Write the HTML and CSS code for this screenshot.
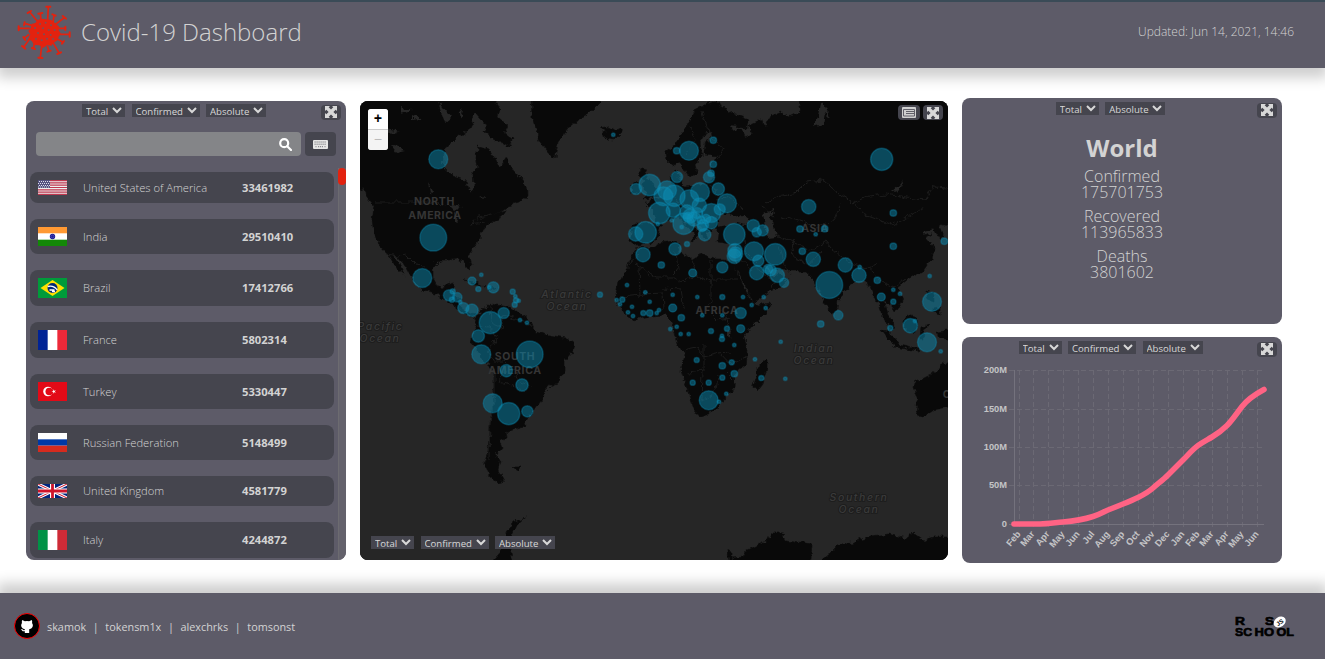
FILE: index.html
```html
<!DOCTYPE html>
<html lang="en">
<head>
<meta charset="utf-8">
<title>Covid-19 Dashboard</title>
<link rel="stylesheet" href="styles.css">
</head>
<body>
<svg class="sprite" width="0" height="0" aria-hidden="true">
  <symbol id="expand" viewBox="0 0 12 12"><path d="M0 0h5L3.700 1.300 6 3.600l2.300-2.300L7 0H12v5L10.700 3.700 8.400 6l2.300 2.300L12 7V12H7l1.300-1.300L6 8.400l-2.300 2.300L5 12H0V7l1.300 1.300L3.600 6 1.300 3.700 0 5z"/></symbol>
</svg>
<header class="header">
  <svg class="virus" viewBox="52 15 165 165">
    <g class="virus-line">
      <path d="M144 60L146 21M112 62L90 36M124 60L122 40M160 68L163 45M165 75L195 52M90 85H58M96 76L77 71M174 103H210M177 85H197M92 113L72 142M88 103L73 115M126 138L122 173M143 138L148 154M160 128L179 160M173 117L190 127M104 132L101 145"/>
      <path class="caps" d="M140 20H152M84 39L94 33M116 41L128 39M158 43L168 47M189 48L199 56M57 79V91M75 67L73 76M210 97V110M197 80V90M67 138L77 146M71 111L77 120M116 173L128 174M143 155L153 152M173 162L184 157M187 131L193 123M97 144L106 147"/>
    </g>
    <path class="virus-core" d="M113 60L126 56 139 58 155 60 166 69 179 80 177 91 184 101 177 110 174 121 162 128 155 137 142 136 130 144 119 136 103 135 97 124 86 116 92 103 86 94 93 84 95 72 107 69z"/>
    <g class="virus-dots"><circle cx="121" cy="72" r="3"/><circle cx="138" cy="68" r="3"/><circle cx="154" cy="76" r="3"/><circle cx="106" cy="84" r="3"/><circle cx="130" cy="85" r="3"/><circle cx="147" cy="90" r="3"/><circle cx="165" cy="90" r="3"/><circle cx="115" cy="99" r="3"/><circle cx="133" cy="103" r="3"/><circle cx="153" cy="105" r="3"/><circle cx="109" cy="116" r="3"/><circle cx="126" cy="121" r="3"/><circle cx="142" cy="116" r="3"/><circle cx="160" cy="117" r="3"/></g>
  </svg>
  <h1 class="title">Covid-19 Dashboard</h1>
  <p class="updated">Updated: Jun 14, 2021, 14:46</p>
</header>

<main class="main">
  <section class="panel list-panel">
    <div class="filters"><select class="w-total"><option>Total</option></select><select class="w-conf"><option>Confirmed</option></select><select class="w-abs"><option>Absolute</option></select></div>
    <button class="icon-btn expand-btn"><svg viewBox="0 0 12 12"><use href="#expand"/></svg></button>
    <div class="search-row">
      <div class="search"><svg viewBox="0 0 13 13"><circle cx="5.200" cy="5.200" r="4"/><path d="M8.200 8.200l3.800 3.800"/></svg></div>
      <button class="kb"><svg viewBox="0 0 15 9"><rect width="15" height="9" rx="1"/><path d="M1.500 2h12M1.500 4.200h12M2.500 6.700h1M5 6.700h5M11.500 6.700h1" stroke-dasharray="1.200 .8"/></svg></button>
    </div>
    <div class="list-wrap">
      <ul class="list">
        <li><svg class="flag" height="15" viewBox="0 0 29 15" preserveAspectRatio="none"><rect width="29" height="15" fill="#eee"/><path d="M0 .6h29M0 2.900h29M0 5.200h29M0 7.500h29M0 9.800h29M0 12.100h29M0 14.400h29" stroke="#bf3850" stroke-width="1.200"/><rect width="12" height="8" fill="#54527f"/><path d="M1 1.500h11M0 3.500h11M1 5.500h11M0 7h11" stroke="#dde" stroke-dasharray="1 1"/></svg><span class="name">United States of America</span><b>33461982</b></li>
        <li><svg class="flag" height="19" viewBox="0 0 29 19" preserveAspectRatio="none"><rect width="29" height="19" fill="#fff"/><rect width="29" height="6.300" fill="#f93"/><rect y="12.700" width="29" height="6.300" fill="#138808"/><circle cx="14.500" cy="9.500" r="2.700" fill="#1b1b94"/><circle cx="14.500" cy="9.500" r="1.500" fill="none" stroke="#6868c8" stroke-width=".5"/></svg><span class="name">India</span><b>29510410</b></li>
        <li><svg class="flag" height="20" viewBox="0 0 29 20" preserveAspectRatio="none"><rect width="29" height="20" fill="#009b3a"/><path d="M14.500 2L26.500 10 14.500 18 2.500 10z" fill="#fedf00"/><circle cx="14.500" cy="10" r="5" fill="#002776"/><path d="M9.700 8.500q6-1.500 9.500 3.500M11.500 12h5M14 13.500h3" stroke="#fff" fill="none" stroke-width="1.300"/></svg><span class="name">Brazil</span><b>17412766</b></li>
        <li><svg class="flag" height="20" viewBox="0 0 3 2" preserveAspectRatio="none"><rect width="3" height="2" fill="#fff"/><rect width="1" height="2" fill="#002395"/><rect x="2" width="1" height="2" fill="#ed2939"/></svg><span class="name">France</span><b>5802314</b></li>
        <li><svg class="flag" height="19" viewBox="0 0 29 19" preserveAspectRatio="none"><rect width="29" height="19" fill="#e30a17"/><circle cx="10" cy="9.500" r="4.800" fill="#fff"/><circle cx="11.300" cy="9.500" r="3.800" fill="#e30a17"/><path d="M13.500 9.500l1.700-.5V7.200l1 1.500 1.800-.5-1.200 1.300 1.200 1.300-1.800-.5-1 1.500V10z" fill="#fff"/></svg><span class="name">Turkey</span><b>5330447</b></li>
        <li><svg class="flag" height="19" viewBox="0 0 3 3" preserveAspectRatio="none"><rect width="3" height="3" fill="#fff"/><rect y="1" width="3" height="1" fill="#0039a6"/><rect y="2" width="3" height="1" fill="#d52b1e"/></svg><span class="name">Russian Federation</span><b>5148499</b></li>
        <li><svg class="flag" height="14" viewBox="0 0 29 14" preserveAspectRatio="none"><rect width="29" height="14" fill="#00247d"/><path d="M0 0L29 14M29 0L0 14" stroke="#fff" stroke-width="3"/><path d="M0 0L29 14M29 0L0 14" stroke="#cf142b" stroke-width="1"/><path d="M14.500 0V14M0 7H29" stroke="#fff" stroke-width="5"/><path d="M14.500 0V14M0 7H29" stroke="#cf142b" stroke-width="2.800"/></svg><span class="name">United Kingdom</span><b>4581779</b></li>
        <li><svg class="flag" height="20" viewBox="0 0 3 2" preserveAspectRatio="none"><rect width="3" height="2" fill="#fff"/><rect width="1" height="2" fill="#009246"/><rect x="2" width="1" height="2" fill="#ce2b37"/></svg><span class="name">Italy</span><b>4244872</b></li>
      </ul>
      <div class="track"><div class="thumb"></div></div>
    </div>
  </section>

  <section class="map-panel">
    <svg class="map" viewBox="360 101 588 459">
      <filter id="rugged" x="0" y="0" width="1" height="1" color-interpolation-filters="sRGB"><feTurbulence type="fractalNoise" baseFrequency=".16" numOctaves="3" seed="4"/><feDisplacementMap in="SourceGraphic" scale="7" xChannelSelector="R" yChannelSelector="G"/></filter>
      <rect x="360" y="101" width="588" height="459" fill="#262626"/>
      <g filter="url(#rugged)">
      <rect x="350" y="91" width="608" height="479" fill="#262626"/>
      <g class="land">
        <path d="M350 91H494V101L500 109 498 117 508 126 505 133 513 139 509 147 501 142 493 138 484 131 487 125 480 119 475 113 470 120 473 126 466 131 459 136 454 141 445 149 443 158 443 166 453 176 466 181 469 189 473 193 474 184 473 175 478 167 476 157 478 145 489 149 496 163 501 166 507 157 513 170 523 181 527 187 528 195 519 203 508 206 500 212 493 214 506 211 502 217 496 220 489 224 482 230 480 238 476 245 468 255 471 266 470 271 466 268 464 261 457 259 449 260 439 260 433 266 433 278 438 287 444 288 446 283 454 281 452 292 460 299 461 309 471 314 477 315 483 309 491 304 503 306 512 308 519 313 531 322 535 332 549 335 566 338 574 344 572 352 565 360 565 371 558 383 548 387 543 398 533 412 523 427 506 432 507 438 500 440 503 448 496 457 500 460 498 470 504 481 497 483 489 476 484 463 488 451 489 440 491 417 494 397 494 370 483 360 476 349 471 343 474 332 478 321 472 316 465 315 459 309 451 303 443 299 436 293 423 290 413 280 406 267 397 256 392 254 399 264 404 275 398 270 389 256 379 245 374 235 372 219 374 206 366 197 360 186 350 180z"/>
        <path d="M531 91L532 118 536 131 542 145 550 155 555 158 558 142 569 128 576 122 588 115 600 103 604 91z"/>
        <path d="M600 128L606 131 601 134 608 139 615 140 622 133 619 128 611 130 606 127zM642 168L648 169 645 176 653 182 655 189 661 193 654 198 643 199 647 193 643 188 645 181 639 176zM631 186L638 182 640 188 637 194 631 194z"/>
        <path d="M666 151L667 161 673 166 681 163 685 170 690 178 697 172 695 165 702 154 700 142 706 132 712 132 705 144 704 155 720 156 713 161 711 170 715 179 706 182 697 185 686 187 681 182 677 171 671 174 672 186 663 190 660 196 646 204 652 210 656 216 654 224 635 223 631 229 630 241 637 246 650 243 658 236 660 226 672 218 680 218 688 227 694 233 692 241 697 237 699 232 690 224 685 216 690 218 701 227 704 239 709 242 707 233 715 229 719 234 718 242 730 244 737 245 737 263 725 259 714 259 700 253 695 260 685 255 678 252 680 244 677 240 660 243 648 249 639 247 631 257 628 268 618 282 616 293 618 304 625 315 633 320 651 316 665 315 671 321 674 332 677 343 684 354 681 371 688 392 695 412 700 415 715 410 727 397 734 388 735 373 745 365 747 350 743 338 752 327 765 314 771 303 757 306 750 299 742 284 733 266 741 278 749 293 754 303 767 293 781 287 787 281 781 273 774 278 766 269 763 264 771 269 782 270 790 271 805 271 815 281 822 297 830 313 837 309 838 298 850 285 860 280 867 282 872 295 878 302 883 318 892 331 894 325 888 314 885 303 890 304 896 312 903 301 897 288 907 280 923 271 932 258 934 247 926 238 932 234 923 236 922 232 934 229 941 241 944 235 939 228 958 215V91H795L802 111 790 117 782 112 770 117 765 127 762 119 749 125 752 134 745 137 741 128 733 131 729 126 747 127 748 119 732 113 715 102 697 107 683 132 675 145z"/>
        <path d="M767 359L757 367 757 375 753 387 757 391 763 383 767 368zM880 330L888 331 898 343 895 345 887 339zM894 344L908 347 919 349 917 351 895 347zM903 319L913 315 918 322 912 333 904 329zM921 327L930 325 923 330 924 339 920 339zM926 291L934 294 934 302 928 300zM933 308L940 307 940 314 933 312zM938 332L958 329V341L940 338zM948 363L943 362 938 371 932 374 925 377 914 383 913 388 918 402 916 413 923 416 933 411 958 406V363zM464 280L475 282 484 286 476 285zM487 287L496 288 490 291z"/>
        <path d="M525 518L512 524 506 532 506 540 500 552 483 570H515L510 550 511 537 516 526zM730 570L728 550 732 552 732 558 743 557 746 551 758 545 767 541 771 532 780 532 786 540 812 544 811 558 806 570zM810 570L830 554 838 546 854 542 870 536 890 534 906 539 914 533 924 540 933 537 958 537V570zM513 467L521 467 518 471z"/>
      </g>
      <g class="water">
        <path d="M718 221L720 215 728 213 732 217 740 214 748 220 748 226 737 223 727 226 718 228zM763 214L773 210 774 214 769 217 774 225 776 237 768 238 765 228zM412 114L423 119 412 121zM391 145L406 151 397 153zM383 128L400 132 386 133zM428 184L433 193 430 194zM448 204L462 207 455 211zM454 211L458 219 455 222zM481 196L486 199 480 198zM401 107L412 111 401 114zM438 102L451 118 445 123zM459 108L465 116 461 118zM820 101L818 118 813 127 823 124 825 113 830 118 823 103zM903 179L900 185 892 192 900 189zM727 331L732 332 730 338z"/>
      </g>
      <path class="borders" d="M375 202H430L447 205M386 254L399 256 406 255 416 265 426 266M484 222L470 224 476 219 492 215M490 306L491 323 501 327 504 315 519 321 529 323 534 329M478 326L489 327 497 338 488 351 494 361 505 361 516 373 519 382 532 386M495 371L495 396 490 421 489 458M506 370L499 382 507 384 525 391M640 253L629 265V271M635 263L656 278 675 278 681 282 697 275M676 252L678 270 672 276M691 257L697 276 711 282 711 259M711 279H737M711 281V301L705 309 716 320 730 318M640 268L641 295 620 297M641 294L663 293 664 310M663 288L681 289 684 309M683 350L697 347 704 357 719 353 731 352M704 345L704 371 687 373M702 371L701 402 716 392 718 375M720 353L731 365 747 356M765 204L776 197 794 194 806 182 823 180 839 194 853 203 868 196 887 194 906 198 925 200 933 187 948 188M853 203L868 216 892 225 908 217 923 207M761 206L775 217M781 217L799 221 817 227 835 219 841 203M776 236L792 242 811 250 825 241 832 249 850 263 869 268 876 264M792 240L794 257 809 265 821 251M867 265L881 281 893 287 906 279M689 126L695 139 686 154M702 112L711 138 723 148 719 160M701 182L716 188 717 200 728 195 743 208M672 192L679 205 692 207 701 218 717 217M745 239L746 252 758 264M737 253L751 270M779 247L785 267 791 275M756 269L775 281 771 290M733 380L725 372M722 310L731 331"/>
      </g>
      <g class="map-labels">
        <text x="434.500" y="204.500">NORTH</text><text x="435" y="218.500">AMERICA</text><text x="515" y="360">SOUTH</text><text x="515" y="374">AMERICA</text><text x="717" y="314">AFRICA</text><text x="815" y="231.500">ASIA</text><text x="947" y="398">O</text>
        <g class="ocean"><text x="567" y="297.500">Atlantic</text><text x="567" y="309.500">Ocean</text><text x="380.500" y="330">Pacific</text><text x="380" y="342">Ocean</text><text x="814" y="352">Indian</text><text x="814" y="364">Ocean</text><text x="859" y="501">Southern</text><text x="859" y="513">Ocean</text></g>
      </g>
      <g id="cases" class="cases"></g>
    </svg>
    <div class="zoom"><button>+</button><button class="off">−</button></div>
    <div class="map-tools">
      <button class="icon-btn wide"><svg viewBox="0 0 14 11"><rect width="14" height="11" rx="1" fill="#d0d0d0"/><path d="M1.500 2.500h11v6.500h-11zM4 4.500h8M4 6.500h8" fill="none" stroke="#55545e" stroke-width=".9"/></svg></button>
      <button class="icon-btn"><svg viewBox="0 0 12 12"><use href="#expand"/></svg></button>
    </div>
    <div class="filters map-filters"><select class="w-total"><option>Total</option></select><select class="w-conf"><option>Confirmed</option></select><select class="w-abs"><option>Absolute</option></select></div>
  </section>

  <div class="side">
    <section class="panel world">
      <div class="filters"><select class="w-total"><option>Total</option></select><select class="w-abs"><option>Absolute</option></select></div>
      <button class="icon-btn expand-btn"><svg viewBox="0 0 12 12"><use href="#expand"/></svg></button>
      <h2>World</h2>
      <p>Confirmed<br>175701753</p><p>Recovered<br>113965833</p><p>Deaths<br>3801602</p>
    </section>
    <section class="panel chart-panel">
      <div class="filters"><select class="w-total"><option>Total</option></select><select class="w-conf"><option>Confirmed</option></select><select class="w-abs"><option>Absolute</option></select></div>
      <button class="icon-btn expand-btn"><svg viewBox="0 0 12 12"><use href="#expand"/></svg></button>
      <svg class="chart" viewBox="962 357 320 206">
        <g id="grid"></g>
        <path class="axis" d="M1014.500 370V524.500M1009 524.500H1264"/>
        <path class="series" d="M1014 524H1040C1048 524 1055 522.700 1063 522S1085 519 1093 516.500 1103 512 1108 510 1118 506 1123 504 1133 500 1138 497.500 1148 492.500 1153 488 1163 480 1168 475 1178 465 1183 460 1193 449 1198 445.500 1207 440 1212 437 1222 430.500 1227 425.500 1237 413 1242 406.500 1252 396 1264 389.500"/>
      </svg>
    </section>
  </div>
</main>

<footer class="footer">
  <span class="gh"><svg viewBox="0 0 16 16"><path d="M2.500 1.200L5.600 2.700Q8 2.100 10.400 2.700L13.500 1.200Q14.200 3 13.800 4.500 15.500 6.500 14.300 9.200 13.300 11.200 10.500 11.600V16H5.500V14Q3.200 14.500 2.300 13 1.700 11.800.7 11.500 2.500 11 3.500 12.300 4.300 13.200 5.500 12.700V11.600Q2.700 11.200 1.700 9.200.6 6.500 2.200 4.500 1.800 3 2.500 1.200z"/></svg></span>
  <nav class="authors"><span>skamok</span><i>|</i><span>tokensm1x</span><i>|</i><span>alexchrks</span><i>|</i><span>tomsonst</span></nav>
  <svg class="rs" viewBox="1234 614 62 25"><g class="rs-text"><text x="1235" y="625" textLength="10" lengthAdjust="spacingAndGlyphs">R</text><text x="1265" y="625" textLength="9" lengthAdjust="spacingAndGlyphs">S</text><text x="1235" y="636" textLength="17" lengthAdjust="spacingAndGlyphs">SC</text><text x="1254.500" y="636" textLength="19.500" lengthAdjust="spacingAndGlyphs">HO</text><text x="1276.500" y="636" textLength="17.500" lengthAdjust="spacingAndGlyphs">OL</text></g><ellipse cx="1279.700" cy="622" rx="6.500" ry="5" transform="rotate(-35 1279.700 622)" fill="#fff"/><text class="js" x="1279.700" y="624.500" transform="rotate(-35 1279.700 622)">JS</text></svg>
</footer>
<script src="app.js"></script>
</body>
</html>
```
FILE: styles.css
```css
* { box-sizing: border-box; }
body { margin: 0; height: 659px; overflow: hidden; display: flex; flex-direction: column; font-family: "Open Sans", sans-serif; color: #d3d3d3; background: #fff; }
h1, h2, p, ul { margin: 0; padding: 0; font-weight: 300; }
button { border: 0; padding: 0; font: inherit; }
.sprite { position: absolute; }
.header { height: 68px; flex: none; background: #5d5b68; border-top: 2px solid #3a4b57; display: flex; align-items: center; padding: 0 31px 6px 17px; box-shadow: 0 7px 12px 3px rgba(0,0,0,.19); }
.virus { width: 55px; height: 55px; }
.virus-line { fill: none; stroke: #e3220f; stroke-width: 5; }
.caps { stroke-width: 6; stroke-linecap: round; }
.virus-core { fill: #e3220f; }
.virus-dots { fill: #77505a; }
.title { margin-left: 9px; font-size: 24px; line-height: 32px; }
.updated { margin-left: auto; font-size: 12px; padding-bottom: 1px; }
.main { height: 525px; flex: none; display: grid; grid-template-columns: 320px 588px 320px; gap: 14px; padding: 0 43px 0 26px; align-items: center; }
.panel { position: relative; background: #5d5b68; border-radius: 8px; overflow: hidden; }
.filters { display: flex; justify-content: center; gap: 6.500px; height: 13px; }
.filters select { height: 13px; border: 0; border-radius: 0; background-color: #45454e; color: #d8d8d8; font: 400 9.600px/11px "Open Sans", sans-serif; padding: 0 0 2px; outline: 0; }
.w-total { width: 43px; }
.w-conf { width: 68px; }
.w-abs { width: 60px; }
.icon-btn { width: 20px; height: 15px; border-radius: 4px; background: #45454e; display: flex; align-items: center; justify-content: center; }
.icon-btn svg { width: 12px; height: 12px; fill: #d8d8d8; }
.icon-btn.wide { width: 22px; }
.icon-btn.wide svg { width: 14px; height: 11px; }
.expand-btn { position: absolute; right: 5px; top: 5px; padding-bottom: 1px; }
.list-panel { height: 459px; padding-top: 3px; display: flex; flex-direction: column; }
.list-panel .filters { padding-right: 24px; }
.list-panel .expand-btn { top: 4px; }
.search-row { display: flex; gap: 4px; margin: 15px 10px 12px; height: 24px; }
.search { width: 265px; border-radius: 4px; background: #848588; display: flex; align-items: center; justify-content: flex-end; padding-right: 9px; }
.search svg { width: 13px; height: 13px; fill: none; stroke: #fff; stroke-width: 2.200; stroke-linecap: round; }
.kb { width: 31px; border-radius: 4px; background: #45454e; display: flex; align-items: center; justify-content: center; }
.kb svg { width: 15px; height: 9px; fill: #e6e6e6; stroke: #66656c; stroke-width: .9; }
.kb rect { stroke: none; }
.list-wrap { display: flex; flex: 1; justify-content: space-between; }
.list { list-style: none; width: 304px; margin: 4px 0 0 4px; display: flex; flex-direction: column; gap: 16px; }
.list li { display: grid; grid-template-columns: 29px 159px 1fr; align-items: center; padding: 8px; border-radius: 8px; background: #45454e; font-size: 11.200px; line-height: 14px; }
.list .flag { width: 29px; display: block; }
.list .name { padding-left: 16px; margin-right: -10px; margin-block: -1px; }
.list b { padding-left: 16px; font-weight: 700; margin-block: -1px; }
.track { width: 8px; background: #64626c; border-left: 1px solid #6c6b70; }
.thumb { width: 8px; height: 17px; margin-left: -1px; border-radius: 4px; background: #e3220f; }
.map-panel { position: relative; height: 459px; border-radius: 8px; overflow: hidden; background: #262626; }
.map { display: block; width: 588px; height: 459px; }
.land { fill: #090909; stroke: #0c0c0c; stroke-width: .6; stroke-linejoin: round; }
.water { fill: #262626; }
.borders { fill: none; stroke: #1c1c1c; stroke-width: 1; }
.map-labels { fill: #353535; font: 700 10.500px Inter, sans-serif; text-anchor: middle; letter-spacing: .6px; }
.ocean { font: italic 500 10.500px Inter, sans-serif; letter-spacing: 1.600px; fill: #3a3a3a; paint-order: stroke; stroke: #1d1d1d; stroke-width: 2px; }
.cases { fill: #0c90b8; fill-opacity: .48; stroke: #0c90b8; stroke-opacity: .35; stroke-width: 1.500; }
.zoom { position: absolute; left: 8px; top: 8px; width: 20px; height: 41px; border-radius: 3px; overflow: hidden; display: flex; flex-direction: column; background: #ccc; gap: 1px; }
.zoom button { height: 20px; background: #fff; color: #000; font: 700 14px/20px "Liberation Mono", monospace; }
.zoom .off { background: #f4f4f4; color: #bbb; font-weight: 400; }
.map-tools { position: absolute; right: 5px; top: 4px; display: flex; gap: 3px; }
.map-filters { position: absolute; left: 11px; bottom: 11px; }
.side { display: grid; grid-template-rows: 226px 226px; gap: 13px; }
.world { text-align: center; padding-top: 4px; }
.world .filters { padding-right: 23px; }
.world h2 { font-size: 24px; line-height: 32px; font-weight: 700; margin: 17px 0 4px; }
.world p { font-size: 16px; line-height: 16px; margin-bottom: 8px; }
.chart-panel { padding-top: 4px; }
.chart-panel .filters { padding-right: 23px; }
.chart { display: block; width: 320px; height: 206px; margin-top: 3px; font: 700 9.300px "Liberation Sans", sans-serif; fill: #c4c4c6; }
.gridline { stroke: #6b6974; stroke-dasharray: 5 3; fill: none; }
.axis { stroke: #74727d; fill: none; }
.series { fill: none; stroke: #ff6384; stroke-width: 5.600; stroke-linecap: round; }
.footer { position: relative; flex: 1; background: #5d5b68; display: flex; align-items: center; padding: 0 29px 0 14px; box-shadow: 0 -7px 12px 3px rgba(0,0,0,.19); }
.gh { width: 26px; height: 26px; border-radius: 50%; border: 1px solid #f00; background: #000; display: flex; align-items: center; justify-content: center; }
.gh svg { width: 14px; height: 14px; fill: #fff; }
.authors { display: flex; margin-left: 7px; font-size: 10.850px; }
.authors i { font-style: normal; width: 19.200px; text-align: center; }
.rs { margin-left: auto; width: 62px; height: 25px; }
.rs-text { font: 900 11px "Liberation Sans", sans-serif; stroke: #000; stroke-width: .6; }
.js { font: 700 6px "Liberation Sans", sans-serif; text-anchor: middle; }
```
FILE: app.js
```js
const ns = "http://www.w3.org/2000/svg";
function add(parent, tag, attrs, text) {
  const el = document.createElementNS(ns, tag);
  for (const key in attrs) el.setAttribute(key, attrs[key]);
  if (text) el.textContent = text;
  parent.appendChild(el);
}

// Case markers grouped by radius: [radius, "x,y x,y ..."]
const cases = [
  [13.4, "433.3,237.7 529.7,354.3 829.3,285"],
  [11.1, "490.3,322.7 508.7,413.7 881.7,159.3"],
  [10.8, "649.7,185 674.3,195.7 659.3,213 683.7,223.7 645.7,232.3 734.3,234.3 775.3,254.3"],
  [9.5, "438.3,159.3 422.3,278 481.3,354.3 492.7,403.3 689,150.7 667,190.3 663.3,196.3 700,192 727,203.3 689.3,199.3 711.3,213 708.7,400.3 754,251.3 932,301.7 927,342.3"],
  [7.2, "643,254.7 735,250.7 734.3,256.3 735.5,254 635.7,234 673.3,210.3 699.3,205.3 687,212 690,216 694,219 808.7,206.7 813.3,259.3 756.7,272.7 777.3,275.3 845.3,265 859,275.3 910.3,325.7"],
  [6.2, "472,310.3 478.3,336 506.3,370.7 522,385 718.3,189 711.3,222.7 704.7,234.7 675,249 753.3,225.7"],
  [5.6, "493.3,287.3 449,295.3 463.3,308 503.7,313 527.3,411.3 677,177 709,177.3 636,189 719.7,209.3 722.3,267.3 740.7,313 762.7,230.3 758.3,260.7 770.7,270.3 697,213 703,225"],
  [4.7, "457.3,297.3 756.7,232.3 784,282.7 838.3,315.3 702,227 706,219 688,217 768,269"],
  [4, "472,281 692.7,273 672.7,308 740.7,328.7 881.3,297 701,220"],
  [3.3, "676.7,150.7 713.3,140.3 713.3,164.3 711,173.3 661.3,265 649.7,313 681.3,317.7 722.3,365.7 734.3,373.7 893.3,213 893.3,246.3 944.3,241.3 800,229 824.7,228.7 802.3,251.3 877.3,280.3 820.7,324"],
  [2.6, "478.3,289 452.7,291.3 452,299.7 512.7,291.7 516,300.3 514.7,304.7 687,244 722.3,297 600,294.7 622.3,299.7 643.3,313 727,328.7 711,331 696.7,360 731.7,362.3 722.3,377.7 692.7,382.7 708.7,382.7 893.3,301.7 890.3,328 761.3,378 722,339"],
  [1.8, "481.3,274.7 489.3,287.3 515.3,296.3 518.7,300.7 460.3,302 520,320 527,322.7 613.3,134.7 681.7,227 657.7,224 671.7,220.3 627,285 645.3,292.3 672.7,294.7 697.3,297 743,297 616.7,300 620,304.3 649.7,301.7 632,306.7 628,312.3 633,316 656.7,313 659,310 702.3,315.3 722.3,315.3 670.3,329 676.7,326.7 680.7,334 688.7,334 722,335.7 734.3,345 726.3,393.7 719,401.7 815.7,234.3 859.7,267 893.3,289.7 900,293.7 929.7,276 915,321 763.7,297 751.7,305 765.7,308 940.7,351.3 780.7,341.7 755,359.3 785.3,378.7"]
];
const layer = document.getElementById("cases");
for (const [r, points] of cases)
  for (const p of points.split(" ")) {
    const [cx, cy] = p.split(",");
    add(layer, "circle", { cx, cy, r });
  }

const grid = document.getElementById("grid");
[["200M", 370.5], ["150M", 409.5], ["100M", 447.5], ["50M", 485.5], ["0", 524.5]].forEach(([label, y]) => {
  if (label !== "0") add(grid, "path", { class: "gridline", d: `M1009 ${y}H1264` });
  add(grid, "text", { x: 1007, y: y + 2.5, "text-anchor": "end" }, label);
});
const months = "Feb Mar Apr May Jun Jul Aug Sep Oct Nov Dec Jan Feb Mar Apr May Jun".split(" ");
const ticks = [1019.5, 1033.5, 1048.5, 1063.5, 1078.5, 1093.5, 1108.5, 1123.5, 1138.5, 1153.5, 1168.5, 1183.5, 1198.5, 1212.5, 1227.5, 1242.5, 1257.5];
ticks.forEach((x, i) => {
  add(grid, "path", { class: "gridline", d: `M${x} 370V529` });
  add(grid, "text", { x: x, y: 535, "text-anchor": "end", transform: `rotate(-50 ${x} 533)` }, months[i]);
});
```
